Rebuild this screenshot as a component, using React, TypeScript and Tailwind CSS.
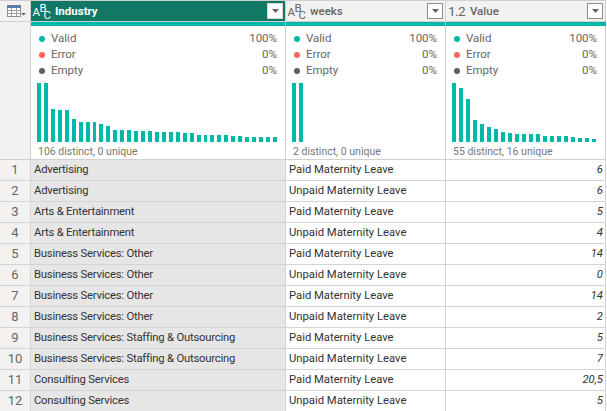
const industryBars = [59, 59, 33, 32, 32, 23, 20, 20, 20, 18, 16, 12, 12, 12, 11, 11, 11, 10, 10, 10, 10, 9, 9, 7, 7, 7, 7, 7, 6, 6, 5, 5, 5, 5, 5];
const weeksBars = [59, 59];
const valueBars = [59, 54, 43, 22, 18, 15, 13, 10, 9, 8, 8, 8, 8, 6, 6, 6, 6, 5, 4, 4, 3];

const rows: [string, string, string][] = [
  ["Advertising", "Paid Maternity Leave", "6"],
  ["Advertising", "Unpaid Maternity Leave", "6"],
  ["Arts & Entertainment", "Paid Maternity Leave", "5"],
  ["Arts & Entertainment", "Unpaid Maternity Leave", "4"],
  ["Business Services: Other", "Paid Maternity Leave", "14"],
  ["Business Services: Other", "Unpaid Maternity Leave", "0"],
  ["Business Services: Other", "Paid Maternity Leave", "14"],
  ["Business Services: Other", "Unpaid Maternity Leave", "2"],
  ["Business Services: Staffing & Outsourcing", "Paid Maternity Leave", "5"],
  ["Business Services: Staffing & Outsourcing", "Unpaid Maternity Leave", "7"],
  ["Consulting Services", "Paid Maternity Leave", "20,5"],
  ["Consulting Services", "Unpaid Maternity Leave", "5"],
];

function TableIcon() {
  return (
    <svg width="30" height="20" viewBox="0 1 30 20">
      <rect x="7.5" y="5.5" width="13" height="11" fill="#fff" stroke="#8a8f96" />
      <rect x="7" y="5" width="14" height="3" fill="#5b7fa8" />
      <path d="M7.5 10.5h13M7.5 13.5h13M11.5 8v8M16.5 8v8" stroke="#9aa0a8" strokeWidth="1" fill="none" />
      <path d="M21 13h5l-2.5 2.5z" fill="#666" />
    </svg>
  );
}

function AbcIcon({ color }: { color: string }) {
  return (
    <svg width="22" height="20" viewBox="0 0 22 20" className="shrink-0 -mr-[4px] font-['Roboto',sans-serif] text-[11.5px]" fill={color}>
      <text x="0.5" y="15">A</text>
      <text x="7.5" y="11">B</text>
      <text x="11.5" y="18">C</text>
    </svg>
  );
}

function FilterButton({ active }: { active?: boolean }) {
  return (
    <span className={`w-[16px] h-[16px] shrink-0 flex items-center justify-center border bg-white ${active ? "border-[#d8d8d8]" : "border-[#8e8e8e]"}`}>
      <svg width="7" height="4" viewBox="0 0 7 4">
        <path d="M0 0h7L3.5 4z" fill="#666" />
      </svg>
    </span>
  );
}

function Stat({ dot, label, value }: { dot: string; label: string; value: string }) {
  return (
    <div className="flex items-center h-4">
      <span className={`w-[6px] h-[6px] rounded-full ${dot}`} />
      <span className="ml-[6px]">{label}</span>
      <span className="ml-auto">{value}</span>
    </div>
  );
}

function Profile({ bars, footer }: { bars: number[]; footer: string }) {
  return (
    <div className="h-full flex flex-col pl-[6px] pr-[8px] text-[#666] text-[11.5px] font-['Roboto',sans-serif]">
      <div className="pt-[5px] pl-[2px]">
        <Stat dot="bg-[#01b8aa]" label="Valid" value="100%" />
        <Stat dot="bg-[#fd625e]" label="Error" value="0%" />
        <Stat dot="bg-[#5f5f5f]" label="Empty" value="0%" />
      </div>
      <div className="h-[59px] mt-[4px] flex items-end gap-[3px] shrink-0">
        {bars.map((h, i) => (
          <div key={i} className="w-[4px] bg-[#01b8aa]" style={{ height: h }} />
        ))}
      </div>
      <div className="mt-[3px] pl-[1px] text-[10.5px] leading-[14px] text-[#777]">{footer}</div>
    </div>
  );
}

export default function App() {
  return (
    <div className="w-[607px] h-[411px] overflow-hidden bg-white font-['Roboto',sans-serif] text-[11.25px] text-[#333]">
      <div className="grid grid-cols-[31px_255px_160px_160px] grid-rows-[22px_4px_134px] w-[607px]">
        {/* header */}
        <div className="bg-[#f3f2f1] border-t border-r border-b border-[#d0d0d0]"><TableIcon /></div>
        <div className="bg-[#117865] border-t border-r border-b border-[#d0d0d0] flex items-center pl-[1px] pr-[2px] text-white">
          <AbcIcon color="#ffffff" />
          <span className="ml-[5px] mt-[2px] font-bold text-[11.5px]">Industry</span>
          <span className="ml-auto"><FilterButton active /></span>
        </div>
        <div className="bg-[#f3f2f1] border-t border-r border-b border-[#d0d0d0] flex items-center pl-[1px] pr-[2px]">
          <AbcIcon color="#666666" />
          <span className="ml-[5px] mt-[2px] font-medium text-[11.5px] text-[#666]">weeks</span>
          <span className="ml-auto"><FilterButton /></span>
        </div>
        <div className="bg-[#f3f2f1] border-t border-r border-b border-[#d0d0d0] flex items-center pl-[2px] pr-[2px]">
          <span className="text-[13.5px] tracking-[-0.6px] text-[#666]">1.2</span>
          <span className="ml-[5px] mt-[2px] font-medium text-[11.5px] text-[#666]">Value</span>
          <span className="ml-auto"><FilterButton /></span>
        </div>
        {/* quality bar */}
        <div className="bg-[#f3f2f1] border-r border-[#d0d0d0]" />
        <div className="bg-[#01b8aa] border-r border-[#7fd8d0]" />
        <div className="bg-[#01b8aa] border-r border-[#7fd8d0]" />
        <div className="bg-[#01b8aa]" />
        {/* profile */}
        <div className="bg-[#f3f2f1] border-r border-b border-[#d0d0d0]" />
        <div className="border-r border-b border-[#d0d0d0]"><Profile bars={industryBars} footer="106 distinct, 0 unique" /></div>
        <div className="border-r border-b border-[#d0d0d0]"><Profile bars={weeksBars} footer="2 distinct, 0 unique" /></div>
        <div className="border-r border-b border-[#d0d0d0]"><Profile bars={valueBars} footer="55 distinct, 16 unique" /></div>
        {/* data */}
        {rows.map((r, i) => (
          <div key={i} className="contents">
            <div className="h-[21px] bg-[#f3f2f1] border-r border-b border-[#d4d4d4] flex items-center justify-center text-[13px] text-[#666]">{i + 1}</div>
            <div className="h-[21px] bg-[#e6e6e6] border-r border-b border-[#d4d4d4] flex items-center pl-[3px] tracking-[-0.2px]">{r[0]}</div>
            <div className="h-[21px] border-r border-b border-[#d4d4d4] flex items-center pl-[3px]">{r[1]}</div>
            <div className="h-[21px] border-r border-b border-[#d4d4d4] flex items-center justify-end pr-[2px] italic">{r[2]}</div>
          </div>
        ))}
      </div>
    </div>
  );
}
